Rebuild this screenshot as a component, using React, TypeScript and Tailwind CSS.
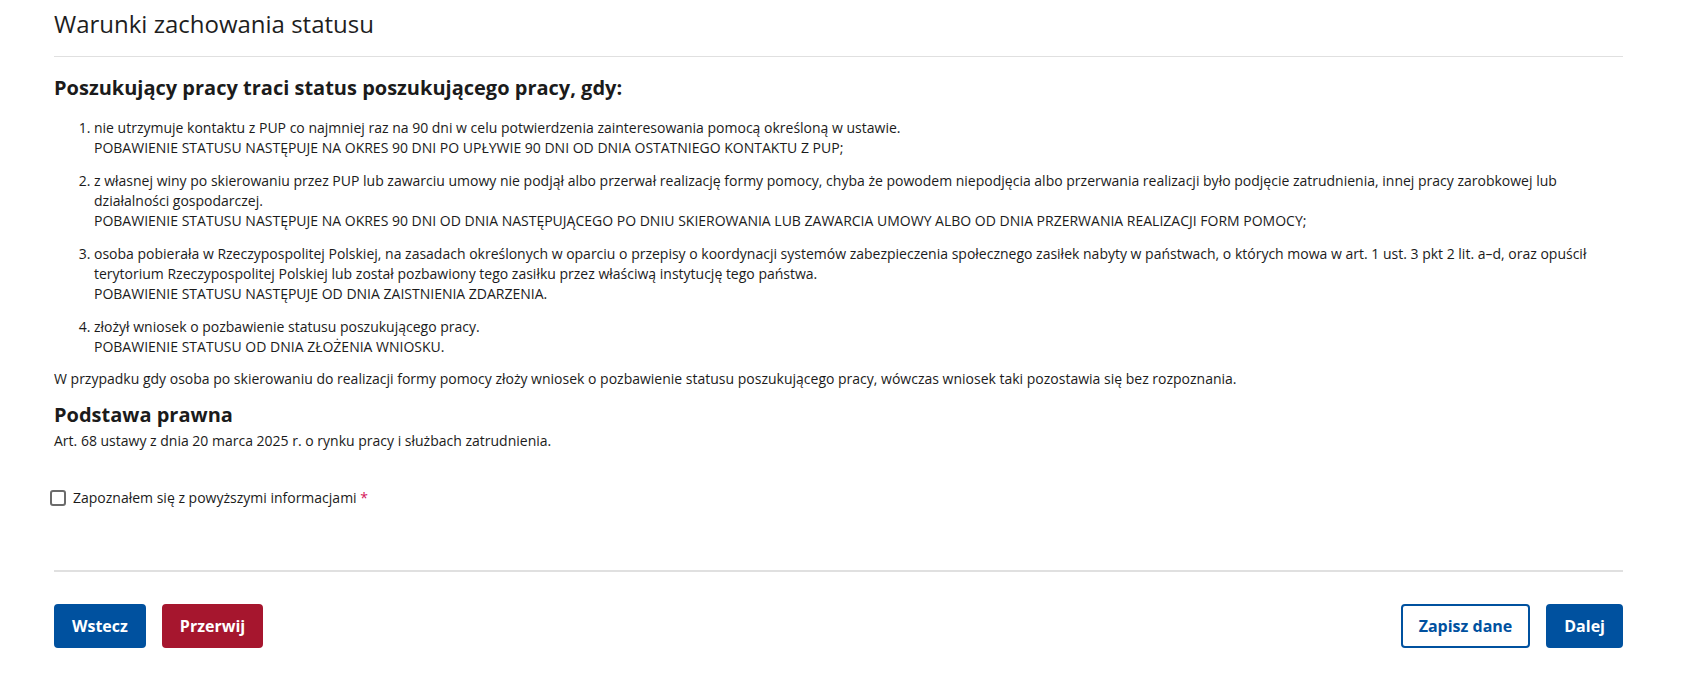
const items: { text: string; note: string }[] = [
  {
    text: "nie utrzymuje kontaktu z PUP co najmniej raz na 90 dni w celu potwierdzenia zainteresowania pomocą określoną w ustawie.",
    note: "POBAWIENIE STATUSU NASTĘPUJE NA OKRES 90 DNI PO UPŁYWIE 90 DNI OD DNIA OSTATNIEGO KONTAKTU Z PUP;",
  },
  {
    text: "z własnej winy po skierowaniu przez PUP lub zawarciu umowy nie podjął albo przerwał realizację formy pomocy, chyba że powodem niepodjęcia albo przerwania realizacji było podjęcie zatrudnienia, innej pracy zarobkowej lub działalności gospodarczej.",
    note: "POBAWIENIE STATUSU NASTĘPUJE NA OKRES 90 DNI OD DNIA NASTĘPUJĄCEGO PO DNIU SKIEROWANIA LUB ZAWARCIA UMOWY ALBO OD DNIA PRZERWANIA REALIZACJI FORM POMOCY;",
  },
  {
    text: "osoba pobierała w Rzeczypospolitej Polskiej, na zasadach określonych w oparciu o przepisy o koordynacji systemów zabezpieczenia społecznego zasiłek nabyty w państwach, o których mowa w art. 1 ust. 3 pkt 2 lit. a–d, oraz opuścił terytorium Rzeczypospolitej Polskiej lub został pozbawiony tego zasiłku przez właściwą instytucję tego państwa.",
    note: "POBAWIENIE STATUSU NASTĘPUJE OD DNIA ZAISTNIENIA ZDARZENIA.",
  },
  {
    text: "złożył wniosek o pozbawienie statusu poszukującego pracy.",
    note: "POBAWIENIE STATUSU OD DNIA ZŁOŻENIA WNIOSKU.",
  },
];

export default function App() {
  return (
    <div className="min-h-screen bg-white pl-[54px] pr-[62px] pt-2 text-[#1b1b1b] font-['Open_Sans',sans-serif]">
      <h1 className="border-b border-[#e0e0e0] pb-4 text-2xl leading-8 font-normal text-[#1e1e1e]">
        Warunki zachowania statusu
      </h1>

      <h2 className="mt-[19px] text-xl leading-6 font-bold">
        Poszukujący pracy traci status poszukującego pracy, gdy:
      </h2>

      <ol className="mt-[18px] list-decimal pl-10 text-sm leading-5">
        {items.map((item) => (
          <li key={item.note} className="mb-[13px] last:mb-0">
            {item.text}
            <br />
            {item.note}
          </li>
        ))}
      </ol>

      <p className="mt-[12px] text-sm leading-5">
        W przypadku gdy osoba po skierowaniu do realizacji formy pomocy złoży wniosek o pozbawienie statusu poszukującego
        pracy, wówczas wniosek taki pozostawia się bez rozpoznania.
      </p>

      <h2 className="mt-[12px] text-xl leading-7 font-bold">Podstawa prawna</h2>
      <p className="mt-[2px] text-sm leading-5">Art. 68 ustawy z dnia 20 marca 2025 r. o rynku pracy i służbach zatrudnienia.</p>

      <label className="-ml-1 mt-[37px] flex items-center gap-[7px] text-sm leading-5">
        <span className="h-4 w-4 rounded-[3px] border-2 border-[#6b6b6b] bg-white" />
        <span>
          Zapoznałem się z powyższymi informacjami <span className="text-[#d4145a]">*</span>
        </span>
      </label>

      <div className="mt-[62px] border-t-2 border-[#e0e0e0]" />

      <div className="mt-8 flex items-center justify-between pb-8">
        <div className="flex gap-4">
          <button className="h-11 rounded border-2 border-[#00519f] bg-[#00519f] px-4 text-base font-bold text-white">
            Wstecz
          </button>
          <button className="h-11 rounded border-2 border-[#a6162e] bg-[#a6162e] px-4 text-base font-bold text-white">
            Przerwij
          </button>
        </div>
        <div className="flex gap-4">
          <button className="h-11 rounded border-2 border-[#00519f] bg-white px-4 text-base font-bold text-[#00519f]">
            Zapisz dane
          </button>
          <button className="h-11 rounded border-2 border-[#00519f] bg-[#00519f] px-4 text-base font-bold text-white">
            Dalej
          </button>
        </div>
      </div>
    </div>
  );
}
